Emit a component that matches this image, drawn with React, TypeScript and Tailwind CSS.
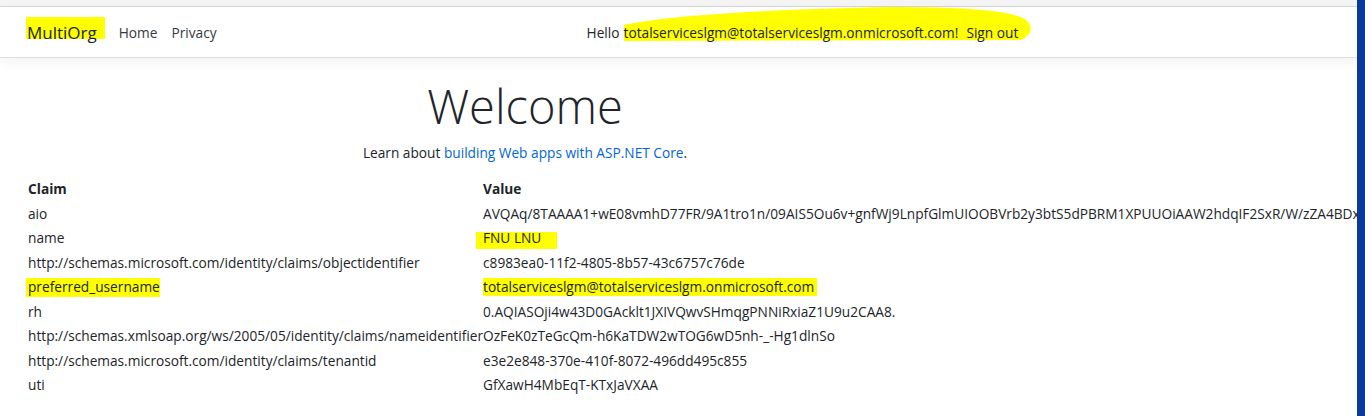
const claims: [string, string][] = [
  ['aio', 'AVQAq/8TAAAA1+wE08vmhD77FR/9A1tro1n/09AIS5Ou6v+gnfWj9LnpfGlmUIOOBVrb2y3btS5dPBRM1XPUUOiAAW2hdqIF2SxR/W/zZA4BDx7Qh2Y'],
  ['name', 'FNU LNU'],
  ['http://schemas.microsoft.com/identity/claims/objectidentifier', 'c8983ea0-11f2-4805-8b57-43c6757c76de'],
  ['preferred_username', 'totalserviceslgm@totalserviceslgm.onmicrosoft.com'],
  ['rh', '0.AQIASOji4w43D0GAcklt1JXIVQwvSHmqgPNNiRxiaZ1U9u2CAA8.'],
  ['http://schemas.xmlsoap.org/ws/2005/05/identity/claims/nameidentifier', 'OzFeK0zTeGcQm-h6KaTDW2wTOG6wD5nh-_-Hg1dlnSo'],
  ['http://schemas.microsoft.com/identity/claims/tenantid', 'e3e2e848-370e-410f-8072-496dd495c855'],
  ['uti', 'GfXawH4MbEqT-KTxJaVXAA'],
]

function Marker({ children, className }: { children: React.ReactNode; className: string }) {
  return (
    <span className="relative inline-block">
      <span className={`absolute bg-[#ffff00] ${className}`} />
      <span className="relative">{children}</span>
    </span>
  )
}

export default function App() {
  return (
    <div className="relative h-[416px] w-[1365px] overflow-hidden bg-white text-[13.7px] text-[#212529]"
      style={{ fontFamily: '"Open Sans", "Noto Sans", sans-serif' }}>
      <div className="h-[7px] border-b border-[#d6d6d6] bg-[#f5f5f5]" />

      <nav className="flex h-[51px] items-center border-b border-[#e0e0e0] bg-white pl-[27px] pt-[2px] shadow-[0_4px_12px_rgba(0,0,0,0.05)]">
        <Marker className="-left-[1px] top-[-3px] h-[22px] w-[79px]">
          <span className="text-[17px] text-[#212529]">MultiOrg</span>
        </Marker>
        <a className="ml-[22px] pt-[1px] text-[#343a40]">Home</a>
        <a className="ml-[14px] pt-[1px] text-[#343a40]">Privacy</a>
        <div className="ml-[370px] flex items-center pt-[1px] text-[#212529]">
          <span className="mr-[4px]">Hello</span>
          <span className="relative inline-block">
            <svg className="absolute -left-[1px] top-[-16px] h-[35px] w-[calc(100%+15px)]"
              viewBox="0 0 412 33" preserveAspectRatio="none">
              <path d="M1 17 C 40 8, 150 2, 270 0 C 350 0, 392 4, 405 12 C 413 18, 411 27, 400 31 L 1 32 Z" fill="#ffff00" />
            </svg>
            <span className="relative">totalserviceslgm@totalserviceslgm.onmicrosoft.com!</span>
            <span className="relative ml-[8px]">Sign out</span>
          </span>
        </div>
      </nav>

      <div className="w-[1050px] pt-[20px] text-center">
        <h1 className="text-[47px] font-light leading-[1.2]">Welcome</h1>
        <p className="mt-[9px]">
          Learn about <a className="text-[#0366d6]">building Web apps with ASP.NET Core</a>.
        </p>
      </div>

      <table className="ml-[28px] mt-[13px] whitespace-nowrap">
        <thead>
          <tr className="h-[25px] text-left">
            <th className="w-[455px] font-bold">Claim</th>
            <th className="font-bold">Value</th>
          </tr>
        </thead>
        <tbody>
          {claims.map(([k, v]) => (
            <tr key={k} className="h-[24.5px]">
              <td>
                {k === 'preferred_username' ? (
                  <Marker className="-left-[2px] -right-[0px] top-[1px] h-[19px]">{k}</Marker>
                ) : k}
              </td>
              <td>
                {k === 'name' ? (
                  <Marker className="-left-[7px] -right-[16px] top-[4px] h-[17px]">{v}</Marker>
                ) : k === 'preferred_username' ? (
                  <Marker className="left-0 -right-[3px] top-[1px] h-[18px]">{v}</Marker>
                ) : v}
              </td>
            </tr>
          ))}
        </tbody>
      </table>

      <div className="absolute right-0 top-0 h-full w-[8px] bg-[#0a3a9a]" />
    </div>
  )
}
